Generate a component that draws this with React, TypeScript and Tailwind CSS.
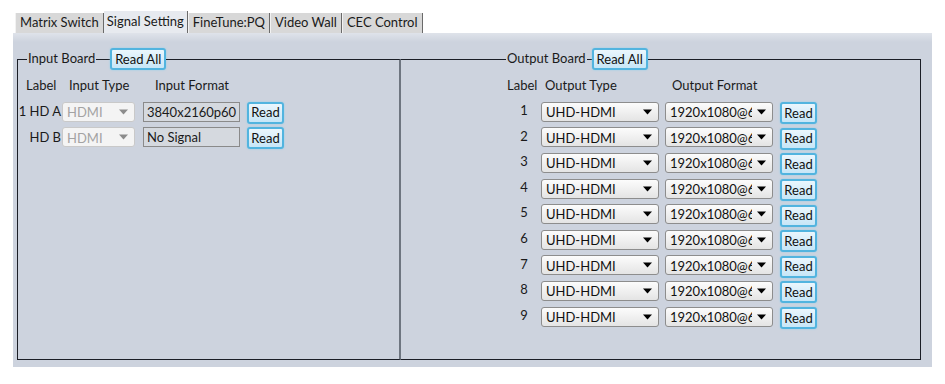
import React from "react";

const font = { fontFamily: "Lato, 'Open Sans', sans-serif" };

const tabs = ["Matrix Switch", "Signal Setting", "FineTune:PQ", "Video Wall", "CEC Control"];

const ReadBtn = ({ label = "Read", w = "w-[37px]" }: { label?: string; w?: string }) => (
  <button
    className={`${w} h-[22px] rounded-[3px] border-2 border-[#52b4df] bg-[linear-gradient(#eaf6fd,#c7e6f7)] text-[13px] leading-none text-[#111] shadow-[0_0_2px_#8fd0ee]`}
  >
    {label}
  </button>
);

const Arrow = ({ color }: { color: string }) => (
  <svg width="9" height="6" viewBox="0 0 9 6" className="shrink-0 ml-[5px]">
    <path d="M0 0.5 L9 0.5 L4.5 5.5 Z" fill={color} />
  </svg>
);

const Select = ({ value, w, disabled }: { value: string; w: string; disabled?: boolean }) => (
  <div
    className={`${w} h-[20px] flex items-center rounded-[3px] border pl-[4px] pr-[6px] text-[13px] ${
      disabled
        ? "border-[#c9c9c9] bg-[#f4f4f4] text-[#a3a3a3]"
        : "border-[#8d8d8d] bg-[linear-gradient(#fcfcfc,#e4e4e4)] text-[#111]"
    }`}
  >
    <span className="flex-1 min-w-0 whitespace-nowrap overflow-hidden pt-[2px]">{value}</span>
    <Arrow color={disabled ? "#8c8c8c" : "#000"} />
  </div>
);

export default function App() {
  const outputs = [1, 2, 3, 4, 5, 6, 7, 8, 9];
  return (
    <div className="w-[945px] h-[384px] bg-white overflow-hidden" style={font}>
      {/* tab strip */}
      <div className="flex items-end pl-[15px] pt-[11px] h-[33px] text-[13px] text-[#1a1a1a]">
        {tabs.map((t, i) =>
          i === 1 ? (
            <div key={t} className="h-[22px] px-[3px] pt-[1px] bg-[#e7eaef] border-r border-[#6a6a6a]">
              {t}
            </div>
          ) : (
            <div
              key={t}
              className="h-[20px] px-[4px] flex items-center bg-[#d8d8d8] border-l border-[#f2f2f2] border-r border-r-[#6a6a6a]"
            >
              {t}
            </div>
          )
        )}
      </div>

      {/* panel */}
      <div className="ml-[13px] w-[919px] h-[334px] bg-[linear-gradient(#dfe3ea,#cdd3de_9px)] pt-[15px] pl-[4px] pr-[11px] pb-[7px] flex">
        {/* input board */}
        <div className="w-[384px] flex flex-col">
          <div className="h-[22px] flex items-center">
            <div className="w-[10px] h-[11px] self-end border-t border-l border-[#1b1e26]" />
            <span className="px-[1px] text-[13px] text-[#1a1a1a]">Input Board</span>
            <div className="w-[14px] h-px bg-[#1b1e26]" />
            <ReadBtn label="Read All" w="w-[56px]" />
            <div className="flex-1 h-[11px] self-end border-t border-[#1b1e26] border-r-2 border-r-[#6e7580]" />
          </div>
          <div className="flex-1 border-l border-b border-[#1b1e26] border-r-2 border-r-[#6e7580] text-[13px] text-[#1a1a1a]">
            <div className="h-[20px] mt-[6px] flex items-center">
              <span className="ml-[8px] w-[43px]">Label</span>
              <span className="w-[86px]">Input Type</span>
              <span>Input Format</span>
            </div>
            <div className="mt-[3px]">
              {[
                ["1 HD A", "3840x2160p60"],
                ["HD B", "No Signal"],
              ].map(([lab, fmt]) => (
                <div key={lab} className="h-[25.5px] flex items-center">
                  <span className="w-[44px] text-right pr-[1px] whitespace-nowrap">{lab}</span>
                  <Select value="HDMI" w="w-[73px]" disabled />
                  <div className="ml-[8px] w-[97px] h-[20px] border border-[#8a8a8a] bg-[#d5d9df] pl-[3px] text-[13px] leading-[18px]">
                    {fmt}
                  </div>
                  <div className="ml-[7px] mt-[2px]">
                    <ReadBtn />
                  </div>
                </div>
              ))}
            </div>
          </div>
        </div>

        {/* output board */}
        <div className="flex-1 flex flex-col">
          <div className="h-[22px] flex items-center">
            <div className="w-[105px] h-px bg-[#1b1e26]" />
            <span className="px-[1px] text-[13px] text-[#1a1a1a]">Output Board</span>
            <div className="w-[5px] h-px bg-[#1b1e26]" />
            <ReadBtn label="Read All" w="w-[56px]" />
            <div className="flex-1 h-[11px] self-end border-t border-r border-[#1b1e26]" />
          </div>
          <div className="flex-1 border-r border-b border-[#1b1e26] text-[13px] text-[#1a1a1a]">
            <div className="h-[20px] mt-[6px] flex items-center">
              <span className="ml-[106px] w-[38px]">Label</span>
              <span className="w-[127px]">Output Type</span>
              <span>Output Format</span>
            </div>
            <div className="mt-[3px]">
              {outputs.map((n) => (
                <div key={n} className="h-[25.6px] flex items-center">
                  <span className="ml-[106px] w-[34px] text-center -mt-[2px]">{n}</span>
                  <Select value="UHD-HDMI" w="w-[118px]" />
                  <div className="ml-[6px]">
                    <Select value="1920x1080@60" w="w-[108px]" />
                  </div>
                  <div className="ml-[7px] mt-[3px]">
                    <ReadBtn />
                  </div>
                </div>
              ))}
            </div>
          </div>
        </div>
      </div>
    </div>
  );
}
